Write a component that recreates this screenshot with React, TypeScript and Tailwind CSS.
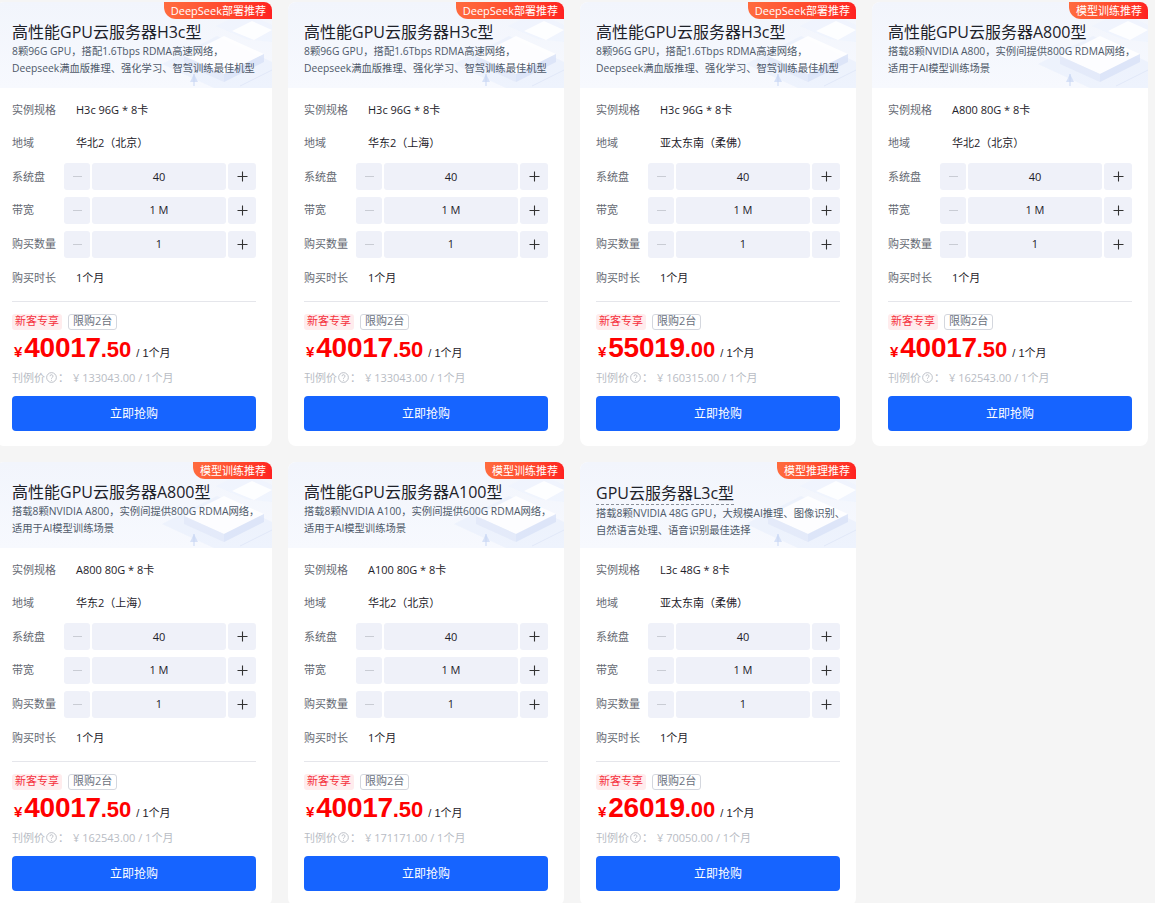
import React from 'react';

type Product = {
  title: string;
  badge: string;
  desc: [string, string];
  spec: string;
  region: string;
  price: string;
  cents: string;
  listPrice: string;
  dashed?: boolean;
};

const H3C_DESC: [string, string] = ['8颗96G GPU，搭配1.6Tbps RDMA高速网络，', 'Deepseek满血版推理、强化学习、智驾训练最佳机型'];
const A800_DESC: [string, string] = ['搭载8颗NVIDIA A800，实例间提供800G RDMA网络，', '适用于AI模型训练场景'];

const products: Product[] = [
  { title: '高性能GPU云服务器H3c型', badge: 'DeepSeek部署推荐', desc: H3C_DESC, spec: 'H3c 96G * 8卡', region: '华北2（北京）', price: '40017', cents: '.50', listPrice: '133043.00' },
  { title: '高性能GPU云服务器H3c型', badge: 'DeepSeek部署推荐', desc: H3C_DESC, spec: 'H3c 96G * 8卡', region: '华东2（上海）', price: '40017', cents: '.50', listPrice: '133043.00' },
  { title: '高性能GPU云服务器H3c型', badge: 'DeepSeek部署推荐', desc: H3C_DESC, spec: 'H3c 96G * 8卡', region: '亚太东南（柔佛）', price: '55019', cents: '.00', listPrice: '160315.00' },
  { title: '高性能GPU云服务器A800型', badge: '模型训练推荐', desc: A800_DESC, spec: 'A800 80G * 8卡', region: '华北2（北京）', price: '40017', cents: '.50', listPrice: '162543.00' },
  { title: '高性能GPU云服务器A800型', badge: '模型训练推荐', desc: A800_DESC, spec: 'A800 80G * 8卡', region: '华东2（上海）', price: '40017', cents: '.50', listPrice: '162543.00' },
  {
    title: '高性能GPU云服务器A100型',
    badge: '模型训练推荐',
    desc: ['搭载8颗NVIDIA A100，实例间提供600G RDMA网络，', '适用于AI模型训练场景'],
    spec: 'A100 80G * 8卡',
    region: '华北2（北京）',
    price: '40017',
    cents: '.50',
    listPrice: '171171.00',
  },
  {
    title: 'GPU云服务器L3c型',
    badge: '模型推理推荐',
    desc: ['搭载8颗NVIDIA 48G GPU，大规模AI推理、图像识别、', '自然语言处理、语音识别最佳选择'],
    spec: 'L3c 48G * 8卡',
    region: '亚太东南（柔佛）',
    price: '26019',
    cents: '.00',
    listPrice: '70050.00',
    dashed: true,
  },
];

// faint isometric blocks behind the card header
const HeaderArt: React.FC = () => (
  <svg className="absolute right-0 top-0 h-full w-[140px]" viewBox="0 0 140 86" fill="none">
    <polygon points="30,62 85,34 140,60 140,86 82,86" fill="#e8eefb" opacity="0.6" />
    <polygon points="52,54 92,34 132,52 92,72" fill="#ffffff" opacity="0.85" />
    <polygon points="52,54 92,72 92,80 52,62" fill="#dfe7f8" opacity="0.7" />
    <polygon points="92,72 132,52 132,60 92,80" fill="#d5e0f6" opacity="0.7" />
    <polygon points="84,24 112,10 140,23 140,40 114,37" fill="#eef3fd" opacity="0.7" />
    <polygon points="100,29 120,19 140,28 122,38" fill="#ffffff" opacity="0.85" />
    <line x1="62" y1="84" x2="62" y2="72" stroke="#c9d7f4" strokeWidth="1" />
    <polygon points="58,80 62,72 66,80" fill="#c9d7f4" opacity="0.7" />
    <line x1="108" y1="84" x2="140" y2="68" stroke="#e1e8f8" strokeWidth="1" />
  </svg>
);

const Stepper: React.FC<{ value: string }> = ({ value }) => (
  <div className="flex h-[27px] flex-1 gap-[2px]">
    <button className="flex w-[26px] items-center justify-center rounded-[3px] bg-[#eff1f9]">
      <span className="block h-px w-[9px] bg-[#c9ccd4]" />
    </button>
    <div className="flex flex-1 items-center justify-center rounded-[3px] bg-[#eff1f9] text-[11px] text-[#1d2129]">{value}</div>
    <button className="flex w-[28px] items-center justify-center rounded-[3px] bg-[#eff1f9]">
      <svg width="11" height="11" viewBox="0 0 11 11">
        <path d="M5.5 0.5v10M0.5 5.5h10" stroke="#333" strokeWidth="1.1" />
      </svg>
    </button>
  </div>
);

const Row: React.FC<{ label: string; children: React.ReactNode }> = ({ label, children }) => (
  <div className="flex h-[33.6px] items-center">
    <span className="w-[52px] shrink-0 text-[11px] text-[#666a73]">{label}</span>
    {children}
  </div>
);

const TextValue: React.FC<{ text: string }> = ({ text }) => (
  <span className="pl-[12px] text-[11px] text-[#1d2129]">{text}</span>
);

const Card: React.FC<{ p: Product }> = ({ p }) => (
  <div className="flex h-[444px] w-[276px] flex-col overflow-hidden rounded-lg bg-white">
    <div className="relative h-[86px] bg-gradient-to-b from-[#f2f5fc] to-[#f7f9fe] px-4 pt-[19px]">
      <HeaderArt />
      <div className="absolute right-0 top-0 flex h-[17px] items-center rounded-bl-[12px] bg-gradient-to-r from-[#ff6b3e] to-[#ff2020] pl-[7px] pr-[6px] text-[11px] leading-none text-white">
        {p.badge}
      </div>
      <div className="relative">
        <div
          className={
            p.dashed
              ? 'inline-block border-b border-dashed border-[#8a8f99] text-[16px] leading-[22px] text-[#1d2129]'
              : 'text-[16px] leading-[22px] text-[#1d2129]'
          }
        >
          {p.title}
        </div>
        <div className="text-[10.3px] leading-[17px] text-[#4e5969]">
          <div className="whitespace-nowrap">{p.desc[0]}</div>
          <div className="whitespace-nowrap">{p.desc[1]}</div>
        </div>
      </div>
    </div>

    <div className="flex flex-1 flex-col px-4 pt-[5px]">
      <Row label="实例规格">
        <TextValue text={p.spec} />
      </Row>
      <Row label="地域">
        <TextValue text={p.region} />
      </Row>
      <Row label="系统盘">
        <Stepper value="40" />
      </Row>
      <Row label="带宽">
        <Stepper value="1 M" />
      </Row>
      <Row label="购买数量">
        <Stepper value="1" />
      </Row>
      <Row label="购买时长">
        <TextValue text="1个月" />
      </Row>

      <div className="mt-[6px] border-t border-[#e5e6eb]" />

      <div className="mt-[12px] flex gap-[6px]">
        <span className="flex h-[16px] items-center rounded-[3px] bg-[#ffeced] px-[3px] text-[11px] text-[#f5313d]">新客专享</span>
        <span className="flex h-[16px] items-center rounded-[3px] border border-[#d4d7de] px-[4px] text-[11px] text-[#6b7280]">限购2台</span>
      </div>

      <div
        className="mt-[2px] flex items-baseline text-[#ff0000]"
        style={{ fontFamily: '"Liberation Sans", "Noto Sans CJK SC", sans-serif' }}
      >
        <span className="mr-[2px] ml-[2px] text-[15px] font-bold">¥</span>
        <span className="text-[28px] font-bold leading-[32px] tracking-[-0.3px]">{p.price}</span>
        <span className="text-[22px] font-bold">{p.cents}</span>
        <span className="ml-[5px] text-[11px] text-[#1d2129]">/ 1个月</span>
      </div>

      <div className="mt-[4px] flex items-center text-[11px] text-[#b8bcc4]">
        <span>刊例价</span>
        <svg width="11" height="11" viewBox="0 0 12 12" className="mx-[1px]">
          <circle cx="6" cy="6" r="5.3" stroke="#b8bcc4" strokeWidth="1" fill="none" />
          <path d="M4.4 4.6a1.6 1.6 0 1 1 2.3 1.4c-.5.3-.7.6-.7 1.1v.3" stroke="#b8bcc4" strokeWidth="1" fill="none" />
          <circle cx="6" cy="9" r="0.6" fill="#b8bcc4" />
        </svg>
        <span>：</span>
        <span className="ml-[4px]">¥ {p.listPrice} / 1个月</span>
      </div>

      <button className="mt-[10px] h-[35px] w-full rounded-[4px] bg-[#1664ff] text-[12px] text-white">立即抢购</button>
    </div>
  </div>
);

export default function App() {
  return (
    <div
      className="h-screen overflow-hidden bg-[#f5f5f5]"
      style={{ fontFamily: '"Open Sans", "Noto Sans CJK SC", sans-serif' }}
    >
      <div className="ml-[-4px] grid grid-cols-[repeat(4,276px)] gap-4 pt-[2px]">
        {products.map((p, i) => (
          <Card key={i} p={p} />
        ))}
      </div>
    </div>
  );
}
